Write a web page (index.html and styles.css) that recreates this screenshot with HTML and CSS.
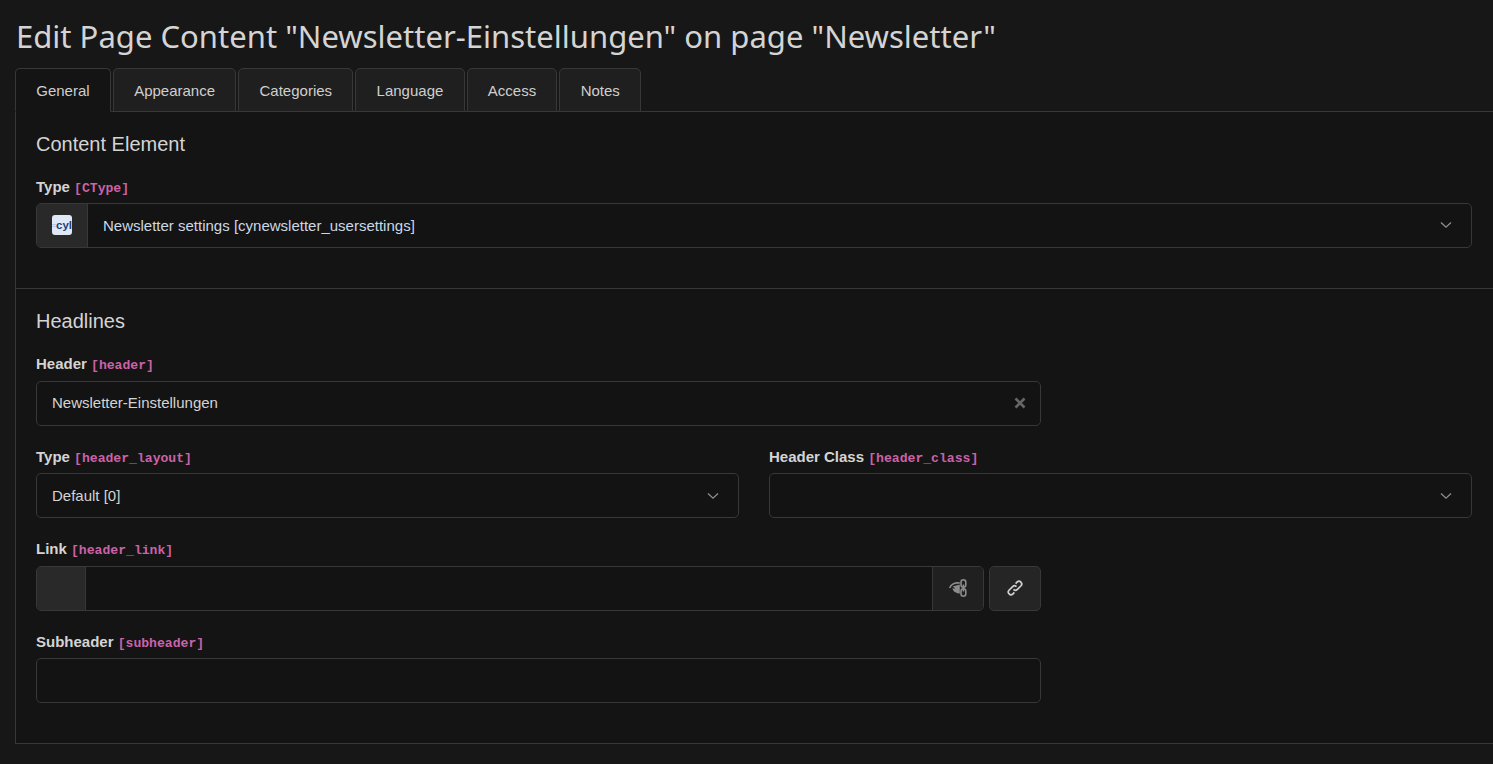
FILE: index.html
```html
<!DOCTYPE html>
<html lang="en">
<head>
<meta charset="utf-8">
<title>Edit Page Content</title>
<link rel="stylesheet" href="styles.css">
</head>
<body>
<h1 class="title">Edit Page Content "Newsletter-Einstellungen" on page "Newsletter"</h1>
<nav class="tabs">
  <a class="tab active">General</a>
  <a class="tab">Appearance</a>
  <a class="tab">Categories</a>
  <a class="tab">Language</a>
  <a class="tab">Access</a>
  <a class="tab">Notes</a>
</nav>
<main class="panel">
  <section class="section first">
    <h2 class="section-title">Content Element</h2>
    <div class="field">
      <label class="label">Type <code class="code">[CType]</code></label>
      <div class="control">
        <span class="addon addon-wide"><span class="ctype-icon"><span class="ctype-dash"></span>cyl</span></span>
        <span class="value value-blue">Newsletter settings [cynewsletter_usersettings]</span>
        <svg class="chevron" viewBox="0 0 12 8"><path d="M1 1.500 6 6.200 11 1.500"/></svg>
      </div>
    </div>
  </section>
  <section class="section second">
    <h2 class="section-title">Headlines</h2>
    <div class="field narrow">
      <label class="label">Header <code class="code">[header]</code></label>
      <div class="control">
        <span class="value">Newsletter-Einstellungen</span>
        <svg class="clear" viewBox="0 0 12 12"><path d="M1.500 1.500 10.500 10.500M10.500 1.500 1.500 10.500"/></svg>
      </div>
    </div>
    <div class="columns">
      <div class="field">
        <label class="label">Type <code class="code">[header_layout]</code></label>
        <div class="control">
          <span class="value">Default [0]</span>
          <svg class="chevron" viewBox="0 0 12 8"><path d="M1 1.500 6 6.200 11 1.500"/></svg>
        </div>
      </div>
      <div class="field">
        <label class="label">Header Class <code class="code">[header_class]</code></label>
        <div class="control">
          <span class="value"></span>
          <svg class="chevron" viewBox="0 0 12 8"><path d="M1 1.500 6 6.200 11 1.500"/></svg>
        </div>
      </div>
    </div>
    <div class="field narrow">
      <label class="label">Link <code class="code">[header_link]</code></label>
      <div class="link-row">
        <div class="control grow">
          <span class="addon"></span>
          <span class="value"></span>
          <span class="addon addon-end">
            <svg class="icon-dim" viewBox="0 0 18 18">
              <path class="line" d="M.7 9C1.800 5.600 5.600 3.300 10.800 4"/>
              <path class="fill" d="M3.800 7.600 10.800 5.600V14.500C7 14.500 3.800 12 3.400 9.200l3 .6z"/>
              <rect class="line" x="12" y=".8" width="4.800" height="7.400" rx="2.400"/>
              <rect class="line" x="12" y="9.800" width="4.800" height="7.400" rx="2.400"/>
              <path class="line" d="M14.400 5.500v7"/>
            </svg>
          </span>
        </div>
        <button class="btn">
          <svg class="icon-link" viewBox="1.500 1.500 13 13">
            <path d="M6.800 9.200a2.200 2.200 0 0 0 3.100 0l3-3a2.200 2.200 0 0 0-3.100-3.100l-1.300 1.300"/>
            <path d="M9.200 6.800a2.200 2.200 0 0 0-3.100 0l-3 3a2.200 2.200 0 0 0 3.100 3.100l1.300-1.300"/>
          </svg>
        </button>
      </div>
    </div>
    <div class="field narrow">
      <label class="label">Subheader <code class="code">[subheader]</code></label>
      <div class="control"></div>
    </div>
  </section>
</main>
</body>
</html>
```
FILE: styles.css
```css
* { box-sizing: border-box; }
html, body { height: 100%; }
body {
  margin: 0;
  padding: 0 0 0 15px;
  background: #171717;
  color: #d9d9d9;
  font-family: "Liberation Sans", Arial, sans-serif;
  font-size: 15px;
  overflow: hidden;
}
.title {
  margin: 0;
  height: 68px;
  padding: 15px 0 0 1px;
  font-family: "Noto Sans", sans-serif;
  font-weight: 400;
  font-size: 31.04px;
  line-height: 42px;
  color: #d4d4d4;
  white-space: nowrap;
}
.tabs {
  display: flex;
  gap: 2px;
  height: 44px;
  position: relative;
  z-index: 1;
}
.tab {
  height: 44px;
  padding: 13px 20.25px 0;
  line-height: 18px;
  background: #1f1f1f;
  border: 1px solid #383838;
  border-radius: 5px 5px 0 0;
  color: #cfcfcf;
  white-space: nowrap;
}
.tab.active {
  background: #141414;
  border-bottom-color: #141414;
}
.panel {
  background: #141414;
  border: 1px solid #383838;
  border-right: 0;
  margin-top: -1px;
  height: 633px;
}
.section { padding: 20px 21px 0 20px; }
.section.first {
  height: 177px;
  border-bottom: 1px solid #383838;
}
.section-title {
  margin: 0;
  font-size: 20px;
  font-weight: 400;
  line-height: 24px;
  color: #d4d4d4;
}
.field { margin-top: 23.1px; }
.section-title + .field { margin-top: 22.6px; }
.second .section-title + .field { margin-top: 23.35px; }
.narrow { width: 70%; }
.columns {
  display: grid;
  grid-template-columns: 1fr 1fr;
  gap: 30px;
}
.label {
  display: block;
  height: 17px;
  margin-bottom: 7.4px;
  line-height: 15px;
  font-weight: 700;
  color: #d4d4d4;
  white-space: nowrap;
}
.code {
  font-family: "Liberation Mono", monospace;
  font-size: 13.1px;
  color: #cc62a8;
}
.control {
  display: flex;
  align-items: center;
  height: 45px;
  background: #131313;
  border: 1px solid #383838;
  border-radius: 5px;
  overflow: hidden;
}
.grow { flex: 1; min-width: 0; }
.value {
  flex: 1;
  padding: 0 15px;
  line-height: 18px;
  color: #d4d4d4;
  white-space: nowrap;
}
.value-blue { color: #cbd8e6; line-height: 17px; }
.addon {
  width: 49px;
  height: 100%;
  flex: none;
  display: flex;
  align-items: center;
  justify-content: center;
  background: #292929;
  border-right: 1px solid #383838;
}
.addon-wide { width: 51px; }
.addon-end {
  width: 51px;
  background: #202020;
  border-right: 0;
  border-left: 1px solid #383838;
}
.ctype-icon {
  width: 20px;
  height: 20px;
  display: flex;
  align-items: center;
  justify-content: flex-end;
  border-radius: 3px;
  background: #dfe8f7;
  color: #1f3f78;
  font-size: 11.5px;
  font-weight: 700;
  line-height: 20px;
  white-space: nowrap;
}
.ctype-dash {
  width: 4px;
  height: 3px;
  margin-right: auto;
  border-top: 1px solid #b4c8ea;
  border-bottom: 1px solid #b4c8ea;
}
.chevron {
  width: 12px;
  height: 8px;
  flex: none;
  margin-right: 19px;
  fill: none;
  stroke: #8e8e8e;
  stroke-width: 1.3;
}
.clear {
  width: 12px;
  height: 12px;
  flex: none;
  margin-right: 14px;
  fill: none;
  stroke: #666;
  stroke-width: 2.6;
}
.link-row { display: flex; gap: 5px; }
.btn {
  width: 52px;
  height: 45px;
  flex: none;
  padding: 0;
  display: flex;
  align-items: center;
  justify-content: center;
  background: #252525;
  border: 1px solid #383838;
  border-radius: 5px;
}
.icon-link {
  width: 16px;
  height: 16px;
  fill: none;
  stroke: #cfcfcf;
  stroke-width: 1.4;
}
.icon-dim { width: 18px; height: 18px; }
.icon-dim .fill { fill: #8c8c8c; }
.icon-dim .line { fill: none; stroke: #8c8c8c; stroke-width: 1.600; }
```
